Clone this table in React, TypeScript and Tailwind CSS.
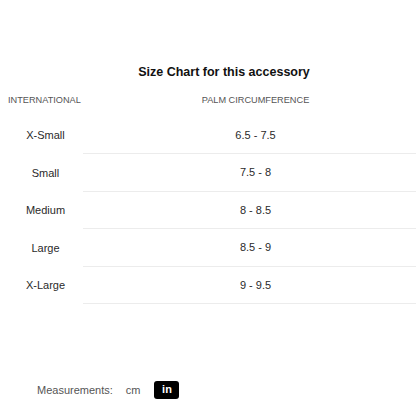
import React from 'react';

const rows = [
  { size: 'X-Small', palm: '6.5 - 7.5' },
  { size: 'Small', palm: '7.5 - 8' },
  { size: 'Medium', palm: '8 - 8.5' },
  { size: 'Large', palm: '8.5 - 9' },
  { size: 'X-Large', palm: '9 - 9.5' },
];

const App: React.FC = () => {
  return (
    <div className="w-[416px] h-[416px] bg-white overflow-hidden font-['Liberation_Sans',Arial,sans-serif]">
      <h2 className="pt-[63px] pl-[32px] text-center text-[12.5px] font-bold text-[#111] leading-[18px]">
        Size Chart for this accessory
      </h2>

      <div className="mt-[12px]">
        {/* header */}
        <div className="flex h-[16px] items-center text-[9.2px] uppercase text-[#555]">
          <div className="w-[83px] pl-[8px] shrink-0">International</div>
          <div className="flex-1 pl-[12px] text-center">Palm Circumference</div>
        </div>

        <div className="mt-[8px]">
          {rows.map(r => (
            <div key={r.size} className="flex h-[37.4px] items-center text-[11px] text-[#2a2a2a]">
              <div className="w-[83px] pl-[8px] shrink-0 text-center">{r.size}</div>
              <div className="flex-1 h-full flex items-center justify-center pl-[12px] border-b border-[#ececec]">
                {r.palm}
              </div>
            </div>
          ))}
        </div>
      </div>

      <div className="mt-[77px] flex items-center pl-[37px] text-[11px] text-[#555]">
        <span>Measurements:</span>
        <span className="ml-[13px]">cm</span>
        <button className="ml-[14px] w-[25px] h-[18px] rounded-[3px] bg-black text-white font-bold text-[11px] leading-none flex items-center justify-center">
          in
        </button>
      </div>
    </div>
  );
};

export default App;
